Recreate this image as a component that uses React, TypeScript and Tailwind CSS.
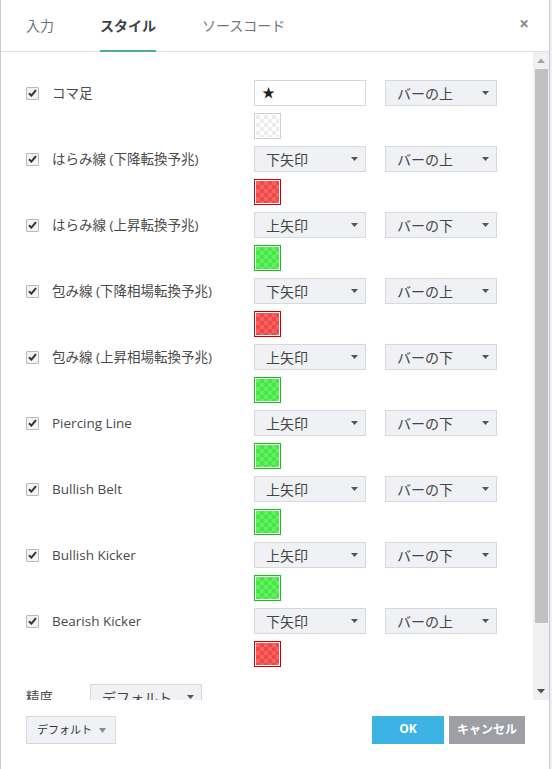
import React from 'react';

type Row = {
  label: string;
  arrow: string | null;
  pos: string;
  color: 'none' | 'red' | 'green';
};

const rows: Row[] = [
  { label: 'コマ足', arrow: null, pos: 'バーの上', color: 'none' },
  { label: 'はらみ線 (下降転換予兆)', arrow: '下矢印', pos: 'バーの上', color: 'red' },
  { label: 'はらみ線 (上昇転換予兆)', arrow: '上矢印', pos: 'バーの下', color: 'green' },
  { label: '包み線 (下降相場転換予兆)', arrow: '下矢印', pos: 'バーの上', color: 'red' },
  { label: '包み線 (上昇相場転換予兆)', arrow: '上矢印', pos: 'バーの下', color: 'green' },
  { label: 'Piercing Line', arrow: '上矢印', pos: 'バーの下', color: 'green' },
  { label: 'Bullish Belt', arrow: '上矢印', pos: 'バーの下', color: 'green' },
  { label: 'Bullish Kicker', arrow: '上矢印', pos: 'バーの下', color: 'green' },
  { label: 'Bearish Kicker', arrow: '下矢印', pos: 'バーの上', color: 'red' },
];

const Caret = () => (
  <svg width="7" height="4" viewBox="0 0 7 4" className="shrink-0">
    <path d="M0 0 L7 0 L3.5 4 Z" fill="#555" />
  </svg>
);

function Select({ value }: { value: string }) {
  return (
    <div className="w-[112px] h-[26px] flex items-center justify-between pl-[11px] pr-[7px] bg-[#f0f1f5] border border-[#d7d9de] text-[#444] text-[14px]">
      <span>{value}</span>
      <Caret />
    </div>
  );
}

function Swatch({ color, id }: { color: Row['color']; id: string }) {
  const c =
    color === 'red'
      ? { border: '#cc0000', a: '#f24848', b: '#f56262' }
      : color === 'green'
      ? { border: '#14c414', a: '#46e646', b: '#62f062' }
      : { border: '#cfcfcf', a: '#ffffff', b: '#ececec' };
  return (
    <svg width="27" height="26" viewBox="0 0 27 26" className="block">
      <defs>
        <pattern id={id} width="8" height="8" patternUnits="userSpaceOnUse" x="2" y="2">
          <rect width="8" height="8" fill={c.a} />
          <rect width="4" height="4" fill={c.b} />
          <rect x="4" y="4" width="4" height="4" fill={c.b} />
        </pattern>
      </defs>
      <rect x="0.5" y="0.5" width="26" height="25" fill="#fff" stroke={c.border} />
      <rect x="2" y="2" width="23" height="22" fill={`url(#${id})`} />
    </svg>
  );
}

function Checkbox() {
  return (
    <div className="w-[13px] h-[13px] border border-[#b9b9b9] bg-[#f3f3f3] flex items-center justify-center rounded-[1px]">
      <svg width="9" height="8" viewBox="0 0 9 8">
        <path d="M1 4.2 L3.4 6.6 L8 1.2" stroke="#333" strokeWidth="2" fill="none" />
      </svg>
    </div>
  );
}

export default function App() {
  return (
    <div
      className="w-[552px] h-[769px] bg-[#eef0f3] flex"
      style={{ fontFamily: '"Open Sans", "Noto Sans CJK JP", sans-serif' }}
    >
      <div className="w-[550px] h-full bg-white border-l border-r border-[#c9c9c9] flex flex-col">
        {/* header tabs */}
        <div className="h-[52px] shrink-0 border-b border-[#e0e0e0] flex items-stretch pl-[25px] pr-[20px]">
          <div className="flex items-center text-[14px] text-[#6e7380] mr-[46px]">入力</div>
          <div className="flex items-center text-[14px] font-bold text-[#3a3f4a] border-b-2 border-[#4cb386] -mb-px mr-[46px]">
            スタイル
          </div>
          <div className="flex items-center text-[14px] text-[#6e7380]">ソースコード</div>
          <div className="ml-auto flex items-center text-[#8a8a8a] text-[17px] font-bold pb-[3px]">×</div>
        </div>

        {/* body */}
        <div className="h-[648px] shrink-0 flex">
          <div className="flex-1 overflow-hidden pt-[28px] pl-[25px]">
            {rows.map((r, i) => (
              <div key={i} className="flex">
                <div className="w-[228px] h-[26px] flex items-center">
                  <Checkbox />
                  <span className="ml-[13px] text-[13.5px] text-[#4a4a4a]">{r.label}</span>
                </div>
                <div className="flex flex-col">
                  <div className="flex gap-[19px]">
                    {r.arrow ? (
                      <Select value={r.arrow} />
                    ) : (
                      <div className="w-[112px] h-[26px] border border-[#d7d9de] flex items-center pl-[7px] text-[13px] text-[#222]">
                        ★
                      </div>
                    )}
                    <Select value={r.pos} />
                  </div>
                  <div className="mt-[7px] mb-[7px]">
                    <Swatch color={r.color} id={`p${i}`} />
                  </div>
                </div>
              </div>
            ))}
            <div className="flex items-center mt-[10px]">
              <span className="w-[64px] text-[13.5px] text-[#4a4a4a]">精度</span>
              <Select value="デフォルト" />
            </div>
          </div>
          {/* scrollbar */}
          <div className="w-[16px] shrink-0 bg-[#f0f0f0] flex flex-col items-center">
            <div className="h-[17px] flex items-center justify-center">
              <svg width="8" height="5" viewBox="0 0 8 5">
                <path d="M0 5 L8 5 L4 0.5 Z" fill="#a3a3a3" />
              </svg>
            </div>
            <div className="w-[13px] h-[554px] bg-[#c1c1c1]" />
            <div className="flex-1 flex items-end justify-center pb-[6px]">
              <svg width="8" height="5" viewBox="0 0 8 5">
                <path d="M0 0 L8 0 L4 4.5 Z" fill="#505050" />
              </svg>
            </div>
          </div>
        </div>

        {/* footer */}
        <div className="flex-1 flex items-start pt-[16px] pl-[25px] pr-[24px]">
          <div className="w-[90px] h-[28px] bg-[#f0f1f5] border border-[#d7d9de] flex items-center pl-[10px] pr-[9px] text-[11px] text-[#333]">
            <span>デフォルト</span>
            <svg width="7" height="5" viewBox="0 0 7 5" className="ml-auto">
              <path d="M0 0 L7 0 L3.5 5 Z" fill="#8a8a8a" />
            </svg>
          </div>
          <div className="ml-auto flex gap-[5px]">
            <div className="w-[72px] h-[28px] bg-[#3cb3e4] text-white text-[12px] font-bold flex items-center justify-center pb-[2px]">
              OK
            </div>
            <div className="w-[76px] h-[28px] bg-[#9d9fa4] text-white text-[12px] font-bold flex items-center justify-center">
              キャンセル
            </div>
          </div>
        </div>
      </div>
    </div>
  );
}
